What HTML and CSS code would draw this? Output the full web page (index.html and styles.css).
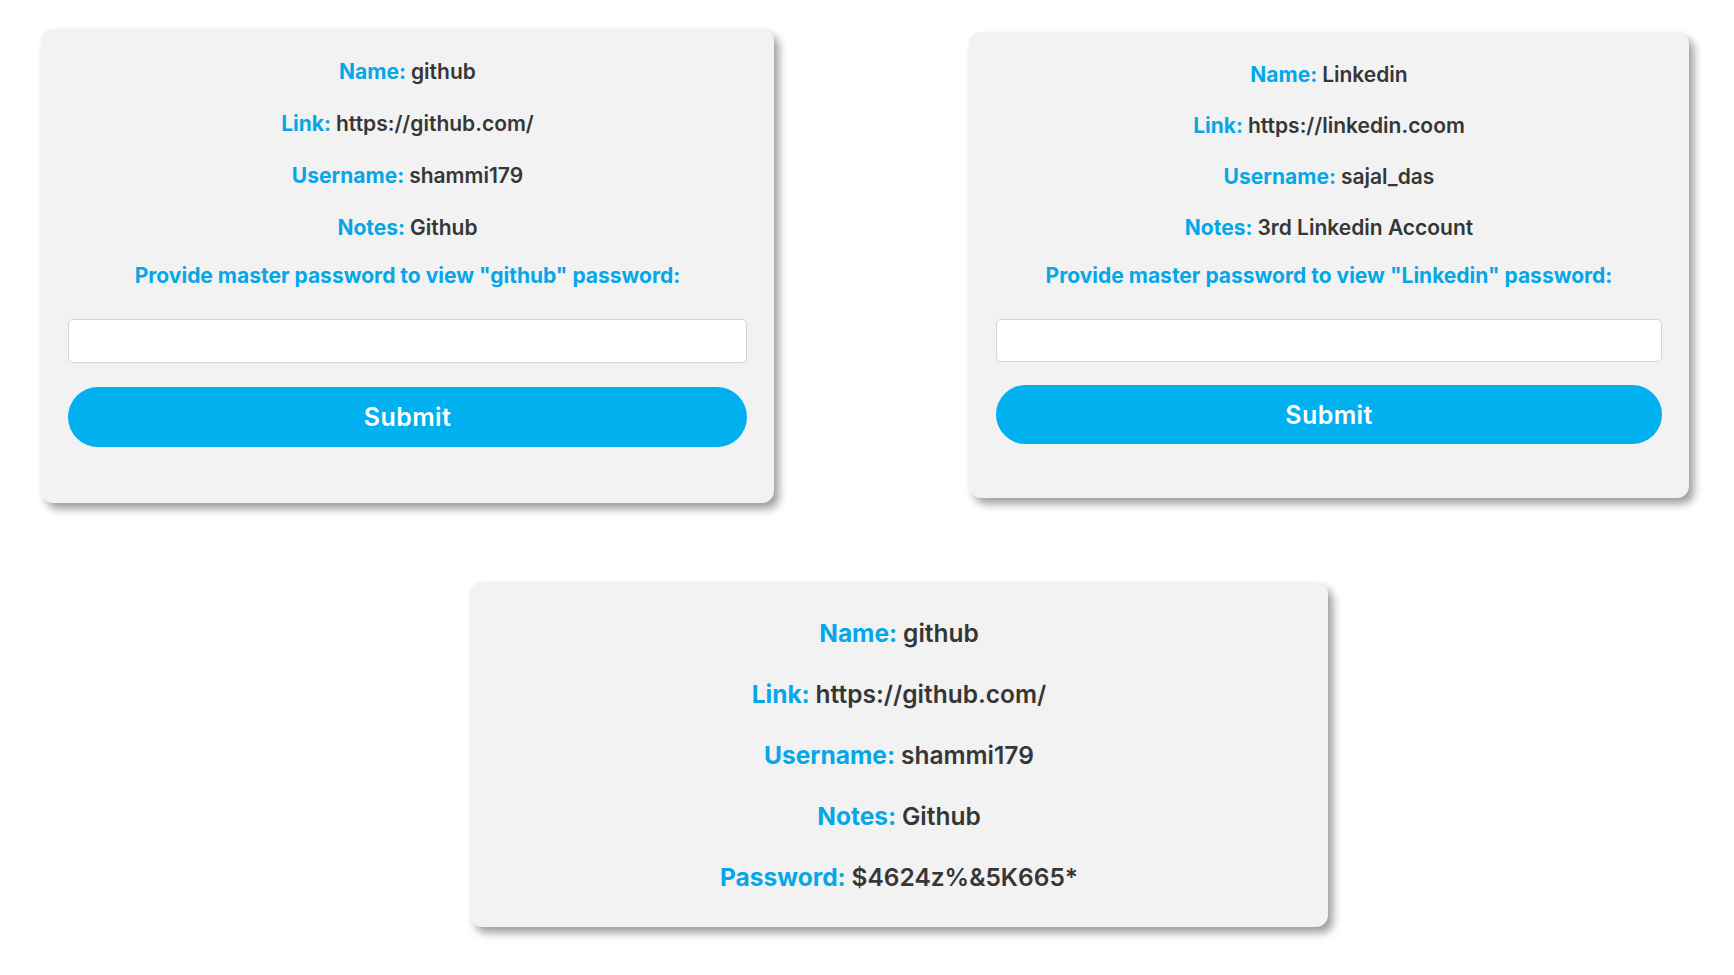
FILE: index.html
```html
<!DOCTYPE html>
<html lang="en">
<head>
<meta charset="utf-8">
<title>Password Vault</title>
<link rel="stylesheet" href="styles.css">
</head>
<body>
<main class="page">
  <div class="row row-top">
    <section class="card card-a">
      <p class="line"><span class="lbl">Name:</span> <span class="val">github</span></p>
      <p class="line"><span class="lbl">Link:</span> <span class="val">https://github.com/</span></p>
      <p class="line"><span class="lbl">Username:</span> <span class="val">shammi179</span></p>
      <p class="line notes"><span class="lbl">Notes:</span> <span class="val">Github</span></p>
      <p class="line prompt">Provide master password to view "github" password:</p>
      <form class="form">
        <input class="field" type="password">
        <button class="btn" type="button">Submit</button>
      </form>
    </section>
    <section class="card card-b">
      <p class="line"><span class="lbl">Name:</span> <span class="val">Linkedin</span></p>
      <p class="line"><span class="lbl">Link:</span> <span class="val">https://linkedin.coom</span></p>
      <p class="line"><span class="lbl">Username:</span> <span class="val">sajal_das</span></p>
      <p class="line notes"><span class="lbl">Notes:</span> <span class="val">3rd Linkedin Account</span></p>
      <p class="line prompt">Provide master password to view "Linkedin" password:</p>
      <form class="form">
        <input class="field" type="password">
        <button class="btn" type="button">Submit</button>
      </form>
    </section>
  </div>
  <div class="row row-bottom">
    <section class="card card-c">
      <p class="line"><span class="lbl">Name:</span> <span class="val">github</span></p>
      <p class="line"><span class="lbl">Link:</span> <span class="val">https://github.com/</span></p>
      <p class="line"><span class="lbl">Username:</span> <span class="val">shammi179</span></p>
      <p class="line"><span class="lbl">Notes:</span> <span class="val">Github</span></p>
      <p class="line"><span class="lbl">Password:</span> <span class="val">$4624z%&amp;5K665*</span></p>
    </section>
  </div>
</main>
</body>
</html>
```

FILE: styles.css
```css
* { box-sizing: border-box; }

html, body {
  margin: 0;
  padding: 0;
  background: #ffffff;
}

body {
  font-family: "Inter", "Open Sans", sans-serif;
  width: 1734px;
  height: 975px;
  overflow: hidden;
}

.page {
  display: flex;
  flex-direction: column;
}

.row {
  display: flex;
  align-items: flex-start;
}

.row-top {
  padding-left: 41px;
}

.row-bottom {
  padding-left: 470px;
  margin-top: 79px;
}

.card {
  background: #f2f2f2;
  border-radius: 12px;
  box-shadow: 5px 6px 8px rgba(0, 0, 0, 0.38);
  display: flex;
  flex-direction: column;
  align-items: center;
  text-align: center;
}

.card-a {
  width: 733px;
  margin-top: 29px;
  padding: 28px 27px 56px 27px;
}

.card-b {
  width: 720px;
  margin-top: 32px;
  margin-left: 195px;
  padding: 28px 27px 54px 27px;
}

.card-c {
  width: 858px;
  padding: 36px 20px 35px;
}

.line {
  margin: 0 0 22px;
  font-size: 21px;
  line-height: 30px;
  font-weight: 700;
  white-space: nowrap;
}

.card-b .line {
  margin-bottom: 21px;
}

.card-a .notes,
.card-b .notes {
  margin-bottom: 18px;
}

.card-c .line {
  font-size: 24.5px;
  line-height: 30px;
  margin-bottom: 31px;
}

.card-c .line:last-child {
  margin-bottom: 0;
}

.lbl {
  color: #05a7e8;
}

.val {
  color: #363636;
  font-weight: 600;
}

.card-a .prompt,
.card-b .prompt {
  color: #05a7e8;
  margin-bottom: 28px;
}

.form {
  width: 100%;
  display: flex;
  flex-direction: column;
  gap: 24px;
  margin: 0;
}

.card-b .form {
  gap: 23px;
}

.field {
  width: 100%;
  height: 44px;
  border: 1px solid #d4d4d4;
  border-radius: 5px;
  background: #ffffff;
  font-size: 16px;
}

.card-b .field {
  height: 43px;
}

.btn {
  width: 100%;
  height: 60px;
  border: none;
  border-radius: 30px;
  background: #00b0ef;
  color: #ffffff;
  font-family: "Inter", "Open Sans", sans-serif;
  font-size: 25px;
  font-weight: 600;
  letter-spacing: 0.4px;
  cursor: pointer;
}

.card-b .btn {
  height: 59px;
}
```
